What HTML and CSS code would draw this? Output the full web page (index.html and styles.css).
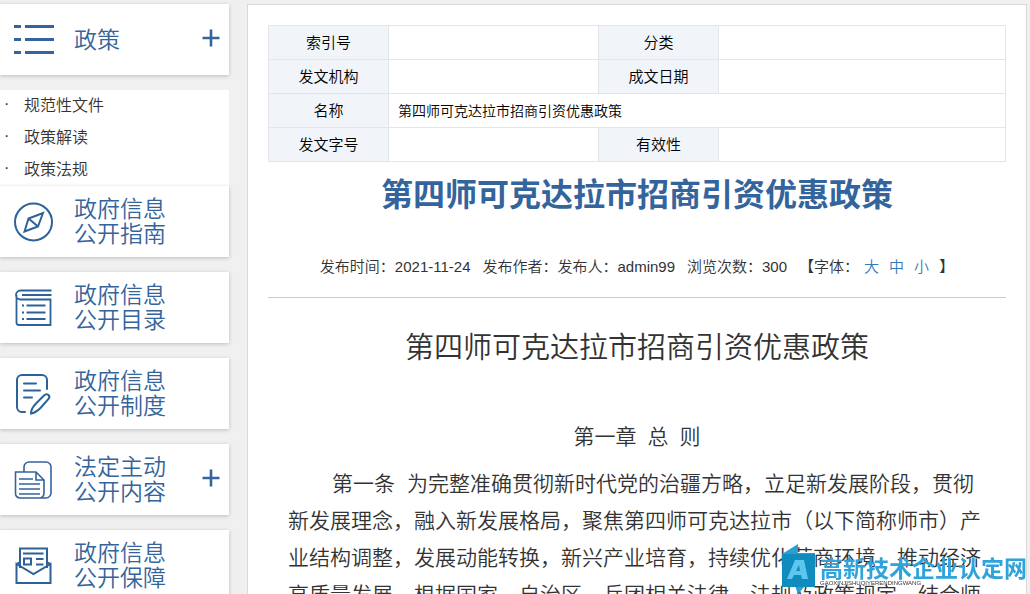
FILE: index.html
```html
<!DOCTYPE html>
<html lang="zh-CN">
<head>
<meta charset="utf-8">
<title>第四师可克达拉市招商引资优惠政策</title>
<link rel="stylesheet" href="styles.css">
</head>
<body>
<div class="page">
  <nav class="sidebar">
    <a class="card" href="#">
      <svg class="icon" viewBox="0 0 42 42" fill="none" stroke="#34649c" stroke-width="3"><path d="M1 7.500h7M12 7.500h29M1 20.500h7M12 20.500h29M1 33.500h7M12 33.500h29"/></svg>
      <span class="label">政策</span>
      <svg class="plus" viewBox="0 0 18 18" fill="none" stroke="#34649c" stroke-width="2.600"><path d="M0.500 9h17M9 0.500v17"/></svg>
    </a>
    <ul class="sub">
      <li><a href="#">规范性文件</a></li>
      <li><a href="#">政策解读</a></li>
      <li><a href="#">政策法规</a></li>
    </ul>
    <a class="card" href="#">
      <svg class="icon" viewBox="0 0 42 42" fill="none" stroke="#2c6299" stroke-width="2"><circle cx="20.500" cy="21" r="18.500"/><path d="M30 12 25 25.500 11.500 30.500 15.500 17.500ZM15.500 17.500 25 25.500"/></svg>
      <span class="label">政府信息<br>公开指南</span>
    </a>
    <a class="card" href="#">
      <svg class="icon" viewBox="0 0 42 42" fill="none" stroke="#2c6299" stroke-width="1.800"><path d="M38.500 3.500H7.500a4.500 4.500 0 0 0 0 9H37.500V38H6a2.500 2.500 0 0 1-2.500-2.500V8M38.500 8H9M13.500 18.500H32.500M13.500 25.500H32.500M13.500 32H32.500M9 18.500h2M9 25.500h2M9 32h2"/></svg>
      <span class="label">政府信息<br>公开目录</span>
    </a>
    <a class="card" href="#">
      <svg class="icon" viewBox="0 0 42 42" fill="none" stroke="#2c6299" stroke-width="2" stroke-linecap="round"><path d="M12 39H9a5 5 0 0 1-5-5V7a5 5 0 0 1 5-5H29a5 5 0 0 1 5 5v9M11 10.500H23M11 17.500H27M11 24.500H19M18 40.500c0-4 2-7 5-10l8-8c3-3 7 0 4.500 3.500l-8 9c-3 3-6 5-9.500 5.500Z"/></svg>
      <span class="label">政府信息<br>公开制度</span>
    </a>
    <a class="card" href="#">
      <svg class="icon" viewBox="0 0 42 42" fill="none" stroke="#34649c" stroke-width="1.600"><path d="M11 13V8a5 5 0 0 1 5-5H33a5 5 0 0 1 5 5V34a5 5 0 0 1-5 5H7a4.500 4.500 0 0 1-4.500-4.500V13H23l8 8V34a5 5 0 0 1-4 5M23 13v8h8M6 20H20M6 25H27M6 30H27M6 35H27"/></svg>
      <span class="label">法定主动<br>公开内容</span>
      <svg class="plus" viewBox="0 0 18 18" fill="none" stroke="#34649c" stroke-width="2.600"><path d="M0.500 9h17M9 0.500v17"/></svg>
    </a>
    <a class="card" href="#">
      <svg class="icon" viewBox="0 0 42 42" fill="none" stroke="#2c6299" stroke-width="2"><path d="M7 23V3.500H34V23M3.500 38V19L20.500 29 37.500 19V38ZM3.500 19 7 17M37.500 19 34 17M10 8.500H30.500M23 14h7.500M23 19.500h7.500"/><path d="M11 13.500h7v6h-7z"/></svg>
      <span class="label">政府信息<br>公开保障</span>
    </a>
  </nav>
  <main class="content">
    <table class="info">
      <colgroup><col class="c-key"><col class="c-val"><col class="c-key"><col></colgroup>
      <tr><th>索引号</th><td></td><th>分类</th><td></td></tr>
      <tr><th>发文机构</th><td></td><th>成文日期</th><td></td></tr>
      <tr><th>名称</th><td colspan="3">第四师可克达拉市招商引资优惠政策</td></tr>
      <tr><th>发文字号</th><td></td><th>有效性</th><td></td></tr>
    </table>
    <h1 class="title">第四师可克达拉市招商引资优惠政策</h1>
    <div class="meta">
      <span>发布时间：2021-11-24</span>
      <span>发布作者：发布人：admin99</span>
      <span>浏览次数：300</span>
      <span class="sizes">【字体：<a href="#">大</a><a href="#">中</a><a href="#">小</a>】</span>
    </div>
    <article class="article">
      <h2 class="subtitle">第四师可克达拉市招商引资优惠政策</h2>
      <h3 class="chapter"><span>第一章</span><span>总</span><span>则</span></h3>
      <p class="para"><span class="clause">第一条</span>为完整准确贯彻新时代党的治疆方略，立足新发展阶段，贯彻新发展理念，融入新发展格局，聚焦第四师可克达拉市（以下简称师市）产业结构调整，发展动能转换，新兴产业培育，持续优化营商环境，推动经济高质量发展，根据国家、自治区、兵团相关法律、法规及政策规定，结合师</p>
    </article>
  </main>
</div>
<div class="mark">
  <svg class="mark-logo" viewBox="0 0 38 50"><path d="M2 10 18 0v9h17v33H25l-7 8-3-8H2Z" fill="#2a9fd6"/><path d="M2 10h33v33H2Z" fill="#108bbd"/><path d="M7 35 15 16h9l4 19h-6l-1-4h-7l-2 4ZM16 27h4l-1-6Z" fill="#5cc6ee" fill-rule="evenodd"/></svg>
  <div class="mark-text"><span class="mark-name">高新技术企业认定网</span><span class="mark-pinyin">GAOXINJISHUQIYERENDINGWANG</span></div>
</div>
</body>
</html>
```
FILE: styles.css
```css
* { box-sizing: border-box; }
body {
  margin: 0;
  height: 100vh;
  overflow: hidden;
  background: #f0f0f0;
  color: #333;
  font-family: "Noto Sans CJK SC", sans-serif;
  font-weight: 350;
}
a { color: inherit; text-decoration: none; }

.page {
  display: grid;
  grid-template-columns: 229px 1fr;
  gap: 18px;
  height: 100vh;
  padding: 4px 3px 0 0;
  overflow: hidden;
}

.sidebar { display: flex; flex-direction: column; }
.card {
  display: flex;
  flex-shrink: 0;
  align-items: center;
  height: 71px;
  margin-bottom: 15px;
  padding: 0 9px 0 13px;
  background: #fff;
  box-shadow: 0 1px 4px rgba(0, 0, 0, 0.22);
  color: #34649c;
}
.icon { width: 42px; height: 42px; }
.label {
  flex: 1;
  margin-left: 19px;
  padding-bottom: 3px;
  font-size: 23px;
  line-height: 25px;
}
.plus { width: 18px; height: 18px; margin-bottom: 4px; }

.sub {
  margin: 0;
  padding: 0;
  list-style: none;
  background: #fff;
  font-size: 16px;
  line-height: 28px;
}
.sub li { display: flex; padding-bottom: 4px; }
.sub li::before { content: "·"; width: 20px; padding-left: 4px; font-family: "Liberation Sans", sans-serif; }

.content {
  padding: 20px;
  background: #fff;
  border: 1px solid #d9d9d9;
}
.info {
  width: 100%;
  table-layout: fixed;
  border-collapse: collapse;
  color: #000;
  font-size: 14px;
}
.c-key { width: 120px; }
.c-val { width: 210px; }
.info th, .info td {
  height: 34px;
  padding: 0 9px 2px;
  border: 1px solid #e3e5e8;
  line-height: 20px;
  text-align: left;
}
.info th { background: #f1f5fa; font-size: 15px; font-weight: 350; text-align: center; }

.title {
  margin: 6px 0 0;
  color: #34649c;
  font-size: 32px;
  font-weight: 700;
  line-height: 48px;
  text-align: center;
}
.meta {
  display: flex;
  justify-content: center;
  gap: 12px;
  margin-top: 34px;
  padding-bottom: 13px;
  border-bottom: 1px solid #ccc;
  font-family: "Liberation Sans", "Noto Sans CJK SC", sans-serif;
  font-size: 15px;
  line-height: 34px;
}
.sizes a { margin: 0 5px; color: #337ab7; }
.sizes a:last-child { margin-right: 10px; }

.article { padding: 0 20px; }
.subtitle {
  margin: 25px 0 0;
  font-size: 29px;
  font-weight: 350;
  line-height: 44px;
  text-align: center;
}
.chapter {
  display: flex;
  justify-content: center;
  gap: 11px;
  margin: 50px 0 0;
  font-size: 21px;
  font-weight: 350;
  line-height: 36px;
}
.para {
  margin: 11px 0 0;
  font-size: 21px;
  line-height: 37px;
  text-indent: 44px;
}
.clause { margin-right: 12px; }

.mark {
  position: fixed;
  right: 3px;
  bottom: 0;
  display: flex;
  color: #2ea3dc;
}
.mark-logo { width: 38px; height: 50px; }
.mark-text { display: flex; flex-direction: column; padding: 12px 0 0 2px; }
.mark-name { font-size: 23px; font-weight: 700; line-height: 23px; }
.mark-pinyin { color: #333; font: 6px/8px "Liberation Sans", sans-serif; }
```
